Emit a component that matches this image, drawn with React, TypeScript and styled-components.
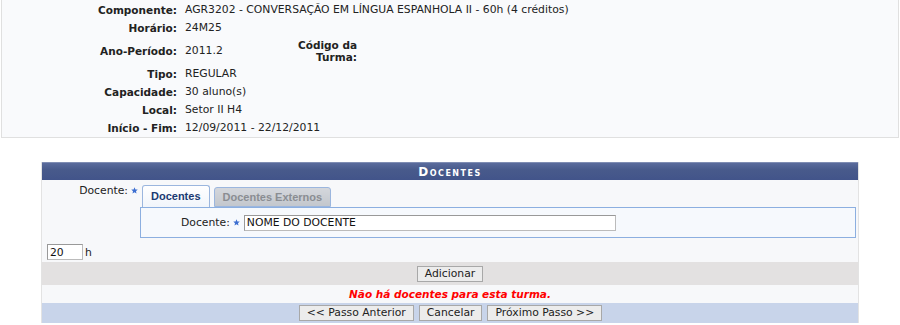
import React from "react";
import styled, { createGlobalStyle } from "styled-components";

const GlobalStyle = createGlobalStyle`
  html, body {
    margin: 0;
    padding: 0;
    background: #fff;
    font-family: "DejaVu Sans", Verdana, sans-serif;
    font-size: 10.8px;
    color: #222;
  }
`;

const InfoBox = styled.section`
  margin: 0 1px;
  border: 1px solid #e0e0e0;
  border-top: none;
  background: #f9fafc;
  padding: 1px 0 0;
`;

const InfoGrid = styled.div`
  display: grid;
  grid-template-columns: 179px 108px 72px 1fr;
  line-height: 14px;
`;

const Label = styled.div<{ $wrap?: boolean }>`
  font-weight: bold;
  font-size: 10.5px;
  text-align: right;
  padding: 2px 4px 2px 0;
  white-space: ${(p) => (p.$wrap ? "normal" : "nowrap")};
  line-height: ${(p) => (p.$wrap ? "12px" : "14px")};
  align-self: center;
`;

const Value = styled.div<{ $span?: number }>`
  padding: 2px 0 2px 4px;
  white-space: nowrap;
  align-self: center;
  grid-column: ${(p) => (p.$span ? `span ${p.$span}` : "auto")};
`;

const Panel = styled.section`
  width: 816px;
  margin: 24px auto 0;
  border-left: 1px solid #e3e3e3;
  border-right: 1px solid #e3e3e3;
  background: #f7f8fa;
`;

const Caption = styled.header`
  height: 18px;
  line-height: 18px;
  background: linear-gradient(#5a6b9c, #485a8b 40%, #42548a);
  border-top: 1px solid #7f8db3;
  box-sizing: border-box;
  color: #fff;
  font-weight: bold;
  font-variant: small-caps;
  font-size: 12px;
  letter-spacing: 1.5px;
  text-align: center;
`;

const FieldRow = styled.div`
  display: grid;
  grid-template-columns: 98px 1fr;
  padding: 4px 2px 0 0;
`;

const FieldLabel = styled.div`
  text-align: right;
  padding-right: 2px;
  white-space: nowrap;
`;

const StarSvg = styled.svg`
  margin: 0 0 0 3px;
  vertical-align: 0;
  flex: none;
`;

const Star = () => (
  <StarSvg viewBox="0 0 10 10" width="7" height="7">
    <path
      d="M5 0.4 L6.3 3.5 L9.6 3.7 L7.1 5.9 L7.9 9.3 L5 7.5 L2.1 9.3 L2.9 5.9 L0.4 3.7 L3.7 3.5 Z"
      fill="#3d6fd1"
    />
  </StarSvg>
);

const Tabs = styled.div`
  display: flex;
  flex-direction: column;
`;

const TabBar = styled.div`
  display: flex;
  gap: 4px;
  padding: 1px 0 0 2px;
  height: 22px;
`;

const Tab = styled.div<{ $active?: boolean }>`
  box-sizing: border-box;
  height: ${(p) => (p.$active ? "22px" : "20px")};
  margin-top: ${(p) => (p.$active ? "0" : "2px")};
  padding: 0 8px;
  line-height: ${(p) => (p.$active ? "21px" : "18px")};
  font-family: "Liberation Sans", Arial, sans-serif;
  font-size: 11px;
  font-weight: bold;
  border: 1px solid #9bb6de;
  border-bottom: ${(p) => (p.$active ? "none" : "1px solid #9bb6de")};
  border-radius: 3px 3px 0 0;
  color: ${(p) => (p.$active ? "#1b3a72" : "#8a8d92")};
  background: ${(p) =>
    p.$active
      ? "linear-gradient(#ffffff, #f1f5fb)"
      : "linear-gradient(#d4d7dc, #c3c7cd)"};
  position: relative;
  z-index: ${(p) => (p.$active ? 1 : 0)};
`;

const TabBody = styled.div`
  border: 1px solid #8cafe0;
  background: #f6f9fd;
  height: 29px;
  display: flex;
  align-items: center;
  padding-left: 40px;
`;

const InnerLabel = styled.span`
  white-space: nowrap;
`;

const TextInput = styled.input<{ $w: number }>`
  box-sizing: border-box;
  width: ${(p) => p.$w}px;
  height: 16px;
  margin: 0 0 0 4px;
  padding: 0 2px;
  border: 1px solid #bbb;
  border-top-color: #999;
  border-left-color: #999;
  background: #fff;
  font-family: "DejaVu Sans", Verdana, sans-serif;
  font-size: 10.8px;
  color: #111;
`;

const HoursRow = styled.div`
  display: flex;
  align-items: center;
  padding: 6px 0 2px 5px;
`;

const HoursInput = styled(TextInput)`
  margin: 0 2px 0 0;
`;

const ActionBar = styled.div`
  background: #e3e1e1;
  height: 23px;
  display: flex;
  align-items: center;
  justify-content: center;
`;

const Button = styled.button`
  box-sizing: border-box;
  height: 16px;
  padding: 0 7px;
  border: 1px solid #a8a8a8;
  background: #ececec;
  font-family: "DejaVu Sans", Verdana, sans-serif;
  font-size: 10.8px;
  line-height: 14px;
  color: #222;
  cursor: pointer;
`;

const Message = styled.div`
  height: 18px;
  line-height: 18px;
  text-align: center;
  color: #ff0000;
  font-size: 10.5px;
  font-weight: bold;
  font-style: italic;
`;

const Footer = styled.footer`
  background: #c8d4ea;
  height: 20px;
  display: flex;
  align-items: center;
  justify-content: center;
  gap: 5px;
  padding-left: 1px;
`;

const info = [
  ["Tipo:", "REGULAR"],
  ["Capacidade:", "30 aluno(s)"],
  ["Local:", "Setor II H4"],
  ["Início - Fim:", "12/09/2011 - 22/12/2011"],
];

export default function App() {
  return (
    <>
      <GlobalStyle />
      <InfoBox>
        <InfoGrid>
          <Label>Componente:</Label>
          <Value $span={3}>
            AGR3202 - CONVERSAÇÃO EM LÍNGUA ESPANHOLA II - 60h (4 créditos)
          </Value>
          <Label>Horário:</Label>
          <Value $span={3}>24M25</Value>
          <Label>Ano-Período:</Label>
          <Value>2011.2</Value>
          <Label $wrap>Código da Turma:</Label>
          <Value />
          {info.map(([l, v]) => (
            <React.Fragment key={l}>
              <Label>{l}</Label>
              <Value $span={3}>{v}</Value>
            </React.Fragment>
          ))}
        </InfoGrid>
      </InfoBox>

      <Panel>
        <Caption>Docentes</Caption>
        <FieldRow>
          <FieldLabel>
            Docente:
            <Star />
          </FieldLabel>
          <Tabs>
            <TabBar>
              <Tab $active>Docentes</Tab>
              <Tab>Docentes Externos</Tab>
            </TabBar>
            <TabBody>
              <InnerLabel>Docente:</InnerLabel>
              <Star />
              <TextInput $w={372} defaultValue="NOME DO DOCENTE" />
            </TabBody>
          </Tabs>
        </FieldRow>
        <HoursRow>
          <HoursInput $w={36} defaultValue="20" />h
        </HoursRow>
        <ActionBar>
          <Button>Adicionar</Button>
        </ActionBar>
        <Message>Não há docentes para esta turma.</Message>
        <Footer>
          <Button>&lt;&lt; Passo Anterior</Button>
          <Button>Cancelar</Button>
          <Button>Próximo Passo &gt;&gt;</Button>
        </Footer>
      </Panel>
    </>
  );
}
